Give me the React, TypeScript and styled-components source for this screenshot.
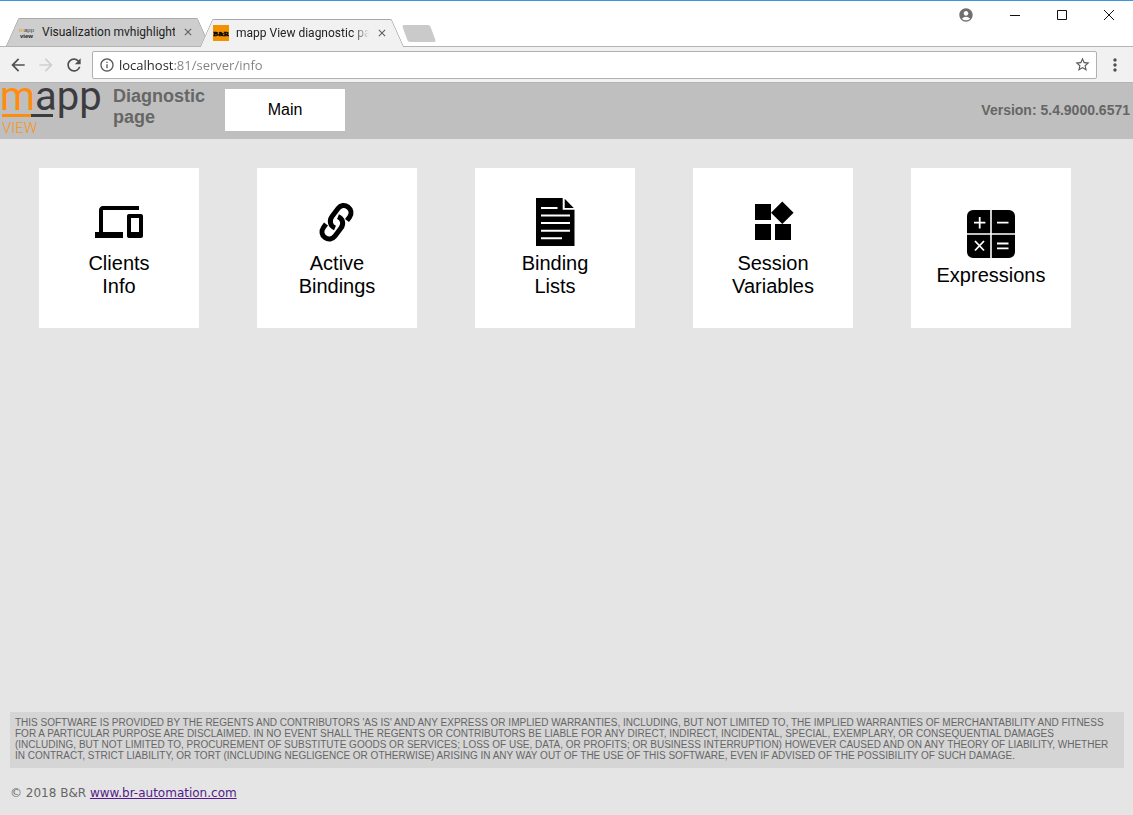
import React from "react";
import styled, { createGlobalStyle } from "styled-components";
import {
  MdAccountCircle,
  MdArrowBack,
  MdArrowForward,
  MdClose,
  MdInfoOutline,
  MdMoreVert,
  MdRefresh,
  MdStarBorder,
} from "react-icons/md";

const GlobalStyle = createGlobalStyle`
  *, *::before, *::after { box-sizing: border-box; }
  body { margin: 0; background: #e5e5e5; font-family: "Liberation Sans", Arial, sans-serif; }
  button { border: 0; padding: 0; background: none; font: inherit; color: inherit; cursor: pointer; }
`;

const Window = styled.div`
  display: flex;
  flex-direction: column;
  min-height: 100vh;
`;

/* ---------- browser frame ---------- */

const TitleBar = styled.div`
  display: flex;
  justify-content: space-between;
  height: 47px;
  background: #fff;
  border-top: 1px solid #3c96dc;
  border-bottom: 1px solid #b4b4b4;
`;

const TabStrip = styled.div`
  display: flex;
  align-items: flex-end;
  gap: 2px;
  padding-left: 12px;
`;

const Tab = styled.div<{ $active?: boolean }>`
  position: relative;
  z-index: ${(p) => (p.$active ? 1 : 0)};
  display: flex;
  align-items: center;
  width: 192px;
  height: 28px;
  margin-bottom: ${(p) => (p.$active ? "-1px" : "0")};
  padding: 0 10px 0 7px;
  font: 12px/16px Roboto, "Segoe UI", sans-serif;
  color: #222;

  &::before,
  &::after {
    content: "";
    position: absolute;
    z-index: -1;
    top: 0;
    bottom: 0;
    background: ${(p) => (p.$active ? "#f1f1f1" : "#cecece")};
    border: 1px solid #a8a8a8;
    border-bottom: 0;
  }
  &::before {
    left: 0;
    right: 20px;
    border-right: 0;
    border-top-left-radius: 2px;
    transform: skewX(-24deg);
  }
  &::after {
    left: 20px;
    right: 0;
    border-left: 0;
    border-top-right-radius: 2px;
    transform: skewX(24deg);
  }
`;

const TabTitle = styled.span<{ $fade?: boolean }>`
  flex: 1;
  min-width: 0;
  margin-left: 7px;
  overflow: hidden;
  white-space: nowrap;
  ${(p) => p.$fade && "mask-image: linear-gradient(to right, #000 88%, transparent);"}
`;

const TabClose = styled.button`
  display: flex;
  margin-left: 7px;
  color: #5a5a5a;
`;

const NewTab = styled.button`
  width: 28px;
  height: 17px;
  margin: 0 0 4px 5px;
  background: #cacaca;
  border-radius: 2px;
  transform: skewX(20deg);
`;

const WindowControls = styled.div`
  display: flex;
  height: 28px;
  padding-right: 1px;
`;

const WindowButton = styled.button<{ $width?: number }>`
  display: flex;
  align-items: center;
  justify-content: center;
  width: ${(p) => p.$width ?? 47}px;
  color: #111;
`;

const Toolbar = styled.div`
  display: flex;
  align-items: center;
  height: 36px;
  padding: 0 4px;
  background: #f1f1f1;
  border-bottom: 1px solid #b4b4b4;
`;

const ToolButton = styled.button`
  display: flex;
  align-items: center;
  justify-content: center;
  width: 28px;
  height: 28px;
  color: #505050;
  &:disabled { color: #cfcfcf; }
`;

const AddressBar = styled.div`
  display: flex;
  flex: 1;
  align-items: center;
  height: 28px;
  margin: 0 4px;
  padding: 0 5px 0 6px;
  background: #fff;
  border: 1px solid #b0b0b0;
  border-radius: 2px;
  color: #5a5a5a;
`;

const AddressInput = styled.input`
  flex: 1;
  min-width: 0;
  margin-left: 4px;
  padding: 0;
  border: 0;
  outline: 0;
  font: 13px/20px "Open Sans", "Segoe UI", sans-serif;
  color: #808080;
  background: linear-gradient(to right, #222 55px, #808080 55px);
  background-clip: text;
  -webkit-text-fill-color: transparent;
`;

/* ---------- page ---------- */

const Header = styled.header`
  display: flex;
  align-items: flex-start;
  height: 56px;
  background: #bfbfbf;
`;

const PageTitle = styled.h1`
  width: 112px;
  margin: 3px 0 0 11px;
  font-size: 18px;
  line-height: 21px;
  color: #666;
`;

const MainButton = styled.button`
  width: 120px;
  height: 42px;
  margin-top: 6px;
  background: #fff;
  font-size: 16px;
  color: #000;
`;

const Version = styled.div`
  margin: 19px 3px 0 auto;
  font-size: 14px;
  line-height: 16px;
  font-weight: bold;
  color: #666;
`;

const Tiles = styled.main`
  display: flex;
  flex: 1;
  flex-wrap: wrap;
  align-content: flex-start;
  gap: 58px;
  padding: 29px 39px;
`;

const Tile = styled.button`
  display: flex;
  flex-direction: column;
  align-items: center;
  justify-content: center;
  gap: 6px;
  width: 160px;
  height: 160px;
  background: #fff;
  font-size: 20px;
  line-height: 23px;
  color: #000;
`;

const TileLabel = styled.span`
  width: min-content;
`;

const Footer = styled.footer`
  padding: 0 9px 14px 10px;
  color: #666;
`;

const Disclaimer = styled.p`
  margin: 0 0 17px;
  padding: 5px 10px 7px 5px;
  background: #d5d5d5;
  font-size: 10px;
  line-height: 11px;
`;

const Copyright = styled.div`
  font: 12px/16px "DejaVu Sans", Verdana, sans-serif;
  a { color: #551a8b; }
`;

/* ---------- drawings ---------- */

const LogoSvg = styled.svg`
  flex: none;
  overflow: visible;
`;

const MappFavicon = () => (
  <svg width="16" height="16" viewBox="0 0 16 16" fontFamily="Liberation Sans, sans-serif" fontSize="6" aria-hidden="true">
    <text x="0" y="8" fill="#444"><tspan fill="#f39200">m</tspan>app</text>
    <text x="1" y="14" fill="#222" fontWeight="bold">view</text>
  </svg>
);

const BrFavicon = () => (
  <svg width="16" height="16" viewBox="0 0 16 16" aria-hidden="true">
    <rect width="16" height="16" fill="#f39200" />
    <text x="8" y="11" textAnchor="middle" fontFamily="Liberation Serif, serif" fontWeight="bold" fontSize="7" stroke="#000" strokeWidth="0.5">B&amp;R</text>
  </svg>
);

const MappLogo = () => (
  <LogoSvg width="102" height="56" viewBox="0 0 102 56" role="img" aria-label="mapp View">
    <text x="0" y="27" fontFamily="Roboto, sans-serif" fontSize="40" fill="#3c3c40"><tspan fill="#ff8c0f">m</tspan>app</text>
    <path d="M2 32.500H31" stroke="#ff8c0f" strokeWidth="3" />
    <path d="M31 32.500H53" stroke="#3c3c40" strokeWidth="3" />
    <text x="2" y="50" fontFamily="Roboto, sans-serif" fontWeight="300" fontSize="15" fill="#f79420">VIEW</text>
  </LogoSvg>
);

const TileIcon = ({ children }: { children: React.ReactNode }) => (
  <svg width="48" height="48" viewBox="0 0 48 48" fill="none" aria-hidden="true">{children}</svg>
);

const linkHalf = "M34 22.500L36.600 19C39 15.500 38.300 11.500 35 9C31.700 6.500 27.500 7.200 25 10.500L19 18.500C16 22.500 17 28 22 30";

const tiles = [
  {
    label: "Clients Info",
    icon: <path fill="#000" d="M8 12h36V8H8c-2.200 0-4 1.800-4 4v22H0v6h28v-6H8V12zm38 4H34c-1.100 0-2 .9-2 2v20c0 1.100.9 2 2 2h12c1.100 0 2-.9 2-2V18c0-1.100-.9-2-2-2zm-2 18h-8V20h8v14z" />,
  },
  {
    label: "Active Bindings",
    icon: (
      <g stroke="#000" strokeWidth="5">
        <path d={linkHalf} />
        <path d={linkHalf} transform="rotate(180 23.500 24.300)" />
      </g>
    ),
  },
  {
    label: "Binding Lists",
    icon: (
      <>
        <path fill="#000" d="M5 0H31.700V11.700H43.500V48H5zM33.700 .8L42.800 10H33.700z" />
        <path stroke="#fff" strokeWidth="2" d="M10 10H26.500M10 17.500H39M10 25H39M10 32.700H39M10 40.300H31" />
      </>
    ),
  },
  {
    label: "Session Variables",
    icon: <path fill="#000" d="M26 26v16h16V26H26zM6 42h16V26H6v16zM6 6v16h16V6H6zm27.300-2.600L22 14.700 33.300 26l11.300-11.300L33.300 3.400z" />,
  },
  {
    label: "Expressions",
    icon: (
      <>
        <path fill="#000" d="M6 0H23.200V23.200H0V6A6 6 0 0 1 6 0zM24.800 0H42A6 6 0 0 1 48 6V23.200H24.800zM0 24.800H23.200V48H6A6 6 0 0 1 0 42zM24.800 24.800H48V42A6 6 0 0 1 42 48H24.800z" />
        <path stroke="#fff" strokeWidth="1.800" d="M7 12.700H18.400M12.700 7V18.400M30 12.700H41.500M8 31L17 40.500M17 31L8 40.500M30 33.500H41.500M30 38.300H41.500" />
      </>
    ),
  },
];

export default function App() {
  return (
    <Window>
      <GlobalStyle />
      <TitleBar>
        <TabStrip>
          <Tab>
            <MappFavicon />
            <TabTitle>Visualization mvhighlight</TabTitle>
            <TabClose aria-label="Close tab"><MdClose size={12} /></TabClose>
          </Tab>
          <Tab $active>
            <BrFavicon />
            <TabTitle $fade>mapp View diagnostic page</TabTitle>
            <TabClose aria-label="Close tab"><MdClose size={12} /></TabClose>
          </Tab>
          <NewTab aria-label="New tab" />
        </TabStrip>
        <WindowControls>
          <WindowButton $width={50} aria-label="Profile"><MdAccountCircle size={16} color="#6e6e6e" /></WindowButton>
          <WindowButton aria-label="Minimize">
            <svg width="10" height="10" viewBox="0 0 10 10"><path d="M0 5.500H10" stroke="currentColor" /></svg>
          </WindowButton>
          <WindowButton aria-label="Maximize">
            <svg width="10" height="10" viewBox="0 0 10 10"><path d="M.5 .5H9.500V9.500H.5z" fill="none" stroke="currentColor" /></svg>
          </WindowButton>
          <WindowButton aria-label="Close">
            <svg width="10" height="10" viewBox="0 0 10 10"><path d="M0 0L10 10M10 0L0 10" stroke="currentColor" /></svg>
          </WindowButton>
        </WindowControls>
      </TitleBar>

      <Toolbar>
        <ToolButton aria-label="Back"><MdArrowBack size={20} /></ToolButton>
        <ToolButton aria-label="Forward" disabled><MdArrowForward size={20} /></ToolButton>
        <ToolButton aria-label="Reload"><MdRefresh size={20} /></ToolButton>
        <AddressBar>
          <MdInfoOutline size={16} />
          <AddressInput aria-label="Address" defaultValue="localhost:81/server/info" spellCheck={false} />
          <MdStarBorder size={17} />
        </AddressBar>
        <ToolButton aria-label="Menu"><MdMoreVert size={20} /></ToolButton>
      </Toolbar>

      <Header>
        <MappLogo />
        <PageTitle>Diagnostic<br />page</PageTitle>
        <MainButton>Main</MainButton>
        <Version>Version: 5.4.9000.6571</Version>
      </Header>

      <Tiles>
        {tiles.map((tile) => (
          <Tile key={tile.label}>
            <TileIcon>{tile.icon}</TileIcon>
            <TileLabel>{tile.label}</TileLabel>
          </Tile>
        ))}
      </Tiles>

      <Footer>
        <Disclaimer>
          THIS SOFTWARE IS PROVIDED BY THE REGENTS AND CONTRIBUTORS 'AS IS' AND ANY EXPRESS OR IMPLIED WARRANTIES,
          INCLUDING, BUT NOT LIMITED TO, THE IMPLIED WARRANTIES OF MERCHANTABILITY AND FITNESS FOR A PARTICULAR PURPOSE
          ARE DISCLAIMED. IN NO EVENT SHALL THE REGENTS OR CONTRIBUTORS BE LIABLE FOR ANY DIRECT, INDIRECT, INCIDENTAL,
          SPECIAL, EXEMPLARY, OR CONSEQUENTIAL DAMAGES (INCLUDING, BUT NOT LIMITED TO, PROCUREMENT OF SUBSTITUTE GOODS
          OR SERVICES; LOSS OF USE, DATA, OR PROFITS; OR BUSINESS INTERRUPTION) HOWEVER CAUSED AND ON ANY THEORY OF
          LIABILITY, WHETHER IN CONTRACT, STRICT LIABILITY, OR TORT (INCLUDING NEGLIGENCE OR OTHERWISE) ARISING IN ANY
          WAY OUT OF THE USE OF THIS SOFTWARE, EVEN IF ADVISED OF THE POSSIBILITY OF SUCH DAMAGE.
        </Disclaimer>
        <Copyright>
          © 2018 B&amp;R <a href="http://www.br-automation.com">www.br-automation.com</a>
        </Copyright>
      </Footer>
    </Window>
  );
}
